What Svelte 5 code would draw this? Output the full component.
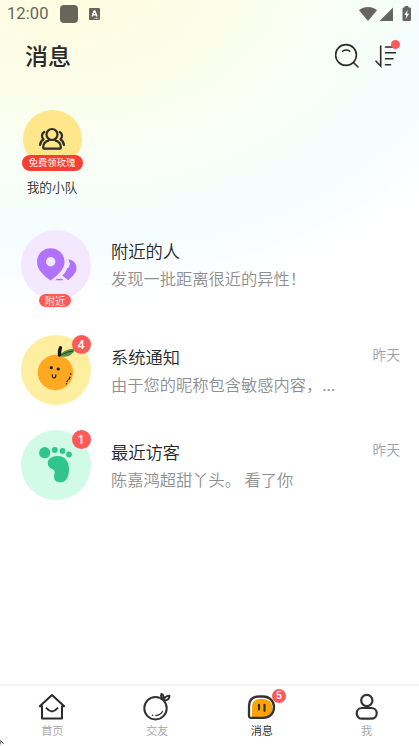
<script lang="ts">
interface Conversation {
  id: string;
  title: string;
  preview: string;
  time?: string;
  unread?: number;
  tag?: string;
}

const conversations: Conversation[] = [
  { id: 'nearby', title: '附近的人', preview: '发现一批距离很近的异性！', tag: '附近' },
  { id: 'system', title: '系统通知', preview: '由于您的昵称包含敏感内容，...', time: '昨天', unread: 4 },
  { id: 'visitors', title: '最近访客', preview: '陈嘉鸿超甜丫头。 看了你', time: '昨天', unread: 1 },
];

const tabs = [
  { id: 'home', label: '首页' },
  { id: 'friends', label: '交友' },
  { id: 'messages', label: '消息', unread: 5 },
  { id: 'me', label: '我' },
];

let activeTab = $state('messages');
</script>

<div class="screen">
  <div class="status-bar">
    <span class="clock">12:00</span>
    <span class="status-block"></span>
    <svg class="status-app" width="11" height="12" viewBox="0 0 11 12">
      <rect width="11" height="12" rx="1" fill="#66665b" />
      <path d="M3 8.5 5.2 3h.6L8 8.5M3.8 6.8h3.4" fill="none" stroke="#fff" stroke-width="1.4" />
      <path d="M5.5 10.3h4" stroke="#fff" stroke-width="1" stroke-dasharray="1 .6" />
    </svg>
    <svg class="status-icons" width="54" height="16" viewBox="0 0 54 16">
      <path d="M0 4.2C5-.2 13-.2 18 4.2L9 15Z" fill="#656662" />
      <path d="M34 1.5V15H20.5Z" fill="#656662" />
      <path d="M45.6 0h3.8v1.6H51q1 0 1 1V14q0 1-1 1h-6.500q-1 0-1-1V2.600q0-1 1-1h1.100Z" fill="#656662" />
      <path d="M48.600 3.800 45.300 9h2l-.6 4 3.400-5.300h-2Z" fill="#fff" />
    </svg>
  </div>

  <header class="header">
    <h1>消息</h1>
    <div class="actions">
      <button type="button" aria-label="搜索">
        <svg width="26" height="26" viewBox="0 0 26 26" fill="none" stroke="#2b2b2b" stroke-width="1.6" stroke-linecap="round">
          <circle cx="11" cy="12" r="10.400" />
          <path d="M7.700 8.200q3.500-2.500 7 0M18.500 19.500l4.500 4.500" />
        </svg>
      </button>
      <button type="button" class="sort" aria-label="排序">
        <svg width="24" height="26" viewBox="0 0 24 26" fill="none" stroke="#2b2b2b" stroke-width="1.600" stroke-linecap="round">
          <path d="M5.700 3v20L1 18.200M10.500 4h10M10.500 9.800h10M10.500 15.800h7.500M10.500 21.700h5" />
        </svg>
        <span class="dot"></span>
      </button>
    </div>
  </header>

  <section class="team">
    <div class="team-avatar">
      <svg width="28" height="24" viewBox="0 0 28 24" fill="none" stroke="#2e2d28" stroke-width="2.200" stroke-linecap="round" stroke-linejoin="round">
        <circle cx="14" cy="7.500" r="5.500" />
        <path d="M10.500 13.600C7 14.500 5.200 17 5.200 20.200q0 1.500 1.500 1.500h14.600q1.500 0 1.500-1.500c0-3.200-1.800-5.700-5.300-6.600" />
        <path d="M6.300 5Q4 6.200 4 9q0 1.900 1.500 3.200Q2.500 14 2 18M21.700 5Q24 6.200 24 9q0 1.900-1.500 3.200 3 1.800 3.500 5.800" />
      </svg>
      <span class="team-tag">免费领玫瑰</span>
    </div>
    <span class="team-name">我的小队</span>
  </section>

  <main class="list">
    {#each conversations as item (item.id)}
      <div class="row {item.id}">
        <div class="avatar">
          {#if item.id === 'nearby'}
            <svg width="70" height="70" viewBox="0 0 70 70">
              <g fill="#b172ff">
                <path d="M47.500 29.300c5 .8 8 4.400 8 8.700 0 4.900-4 8.600-8.300 12.200l-6-4.600c2.500-2.400 4.200-4.700 4.800-7.200l2.400-1.600-.4-1.500 1.500-1.200-1.200-1.400Z" />
                <path d="M29.500 18.200c8 0 14 6 14 13.700 0 8-7.500 13.500-14 18.600-6-4.600-13.500-10.600-13.500-18.600 0-7.700 6-13.700 13.500-13.700Z" />
                <path d="M36 48.700h5l1.500 1.600h-8.500Z" />
              </g>
              <circle cx="29.700" cy="31.800" r="4.700" fill="#f3e8ff" />
            </svg>
          {:else if item.id === 'system'}
            <svg width="70" height="70" viewBox="0 0 70 70">
              <circle cx="34.400" cy="37.500" r="17.700" fill="#ffa923" />
              <path d="M38.500 21c3-5.500 9-7.500 16-7.300-2.500 6-8 9.500-16 7.300Z" fill="#559444" />
              <path d="M40.500 20q5.500-3.500 11.500-4" fill="none" stroke="#244820" stroke-width="1" />
              <path d="M38.500 20Q38 16 39.500 12.800" fill="none" stroke="#171916" stroke-width="3.400" stroke-linecap="round" />
              <circle cx="30.300" cy="32.700" r="1.600" fill="#211e16" />
              <circle cx="37.200" cy="34" r="1.600" fill="#211e16" />
              <path d="M31.300 39.500q-.2 3.700 2 3.500 1.500-.3 1.600-3.200M49.800 38.500v1M49 42l-1 2.500M46.500 45.500l-.5 1M45.500 48.500v.3" fill="none" stroke="#211e16" stroke-width="1.200" stroke-linecap="round" />
            </svg>
          {:else}
            <svg width="70" height="70" viewBox="0 0 70 70" fill="#2fc58b">
              <circle cx="23.700" cy="22.700" r="5.600" />
              <circle cx="33.800" cy="20" r="2.900" />
              <circle cx="41.500" cy="21" r="2.900" />
              <circle cx="48" cy="24.500" r="2.900" />
              <path d="M36 26c7.500-.5 12 5 12 13 0 6.500-2 13-8 13.300-4.500.2-7.200-2-7-5.500.1-2 .8-3.500.6-5.300-.3-2-2.600-2.200-4.600-3.800-1.900-1.500-2.600-3.600-2.200-5.700.8-3.700 4.700-5.800 9.200-6Z" />
            </svg>
          {/if}
          {#if item.unread}
            <span class="badge">{item.unread}</span>
          {/if}
          {#if item.tag}
            <span class="tag">{item.tag}</span>
          {/if}
        </div>
        <div class="body">
          <div class="title">{item.title}</div>
          <div class="preview">{item.preview}</div>
        </div>
        {#if item.time}
          <span class="time">{item.time}</span>
        {/if}
      </div>
    {/each}
  </main>

  <nav class="tab-bar">
    {#each tabs as tab (tab.id)}
      <button type="button" class="tab" class:active={activeTab === tab.id} onclick={() => (activeTab = tab.id)}>
        <span class="tab-icon">
          {#if tab.id === 'home'}
            <svg width="30" height="28" viewBox="0 0 30 28" fill="none" stroke="#30282a" stroke-width="2" stroke-linejoin="round" stroke-linecap="round">
              <path d="M15 2 2.800 13.200H5V25.500H25V13.200h2.200Z" />
              <path d="M9.500 15.200q5.500 6.500 11 0" />
            </svg>
          {:else if tab.id === 'friends'}
            <svg width="30" height="28" viewBox="0 0 30 28" fill="none" stroke="#333" stroke-width="2" stroke-linecap="round" stroke-linejoin="round">
              <circle cx="13.500" cy="15.200" r="11.200" />
              <path d="M21 6.300q-3-2.500-1.500-5.500 3 1.500 1.500 5.500ZM21.500 7.300q1-4.300 6-4.500-.5 5.200-6 4.500Z" stroke-width="1.900" />
              <path d="M14 22.500q4.500-.5 6.500-4M10.500 22.200h.2" stroke-width="1.400" />
            </svg>
          {:else if tab.id === 'messages'}
            <svg width="30" height="28" viewBox="0 0 30 28" stroke-linejoin="round" stroke-linecap="round">
              <path d="M2 25V13.500Q2 3.500 12 3.500h4c6.500 0 11 4.500 11 10.700S22.500 25 16 25Z" fill="#fff" />
              <path d="M5 24.500V14.500Q5 6 13 6h3.500q9 1 9 9t-9 9.500Z" fill="#ffa20a" />
              <path d="M4 24.800Q2 24.800 2 22.800V13.500Q2 3.500 12 3.500h4c6.500 0 11 4.500 11 10.700S22.500 24.800 16 24.800Z" fill="none" stroke="#333" stroke-width="2.300" />
              <path d="M12 11.800v4.700M17.500 11.800v6" stroke="#333" stroke-width="2.200" />
            </svg>
          {:else}
            <svg width="30" height="28" viewBox="0 0 30 28" fill="none" stroke="#333" stroke-width="2.200">
              <circle cx="14.800" cy="7.500" r="5.600" />
              <rect x="4.700" y="15" width="20" height="10.700" rx="5.200" />
            </svg>
          {/if}
          {#if tab.unread}
            <span class="tab-badge">{tab.unread}</span>
          {/if}
        </span>
        <span class="tab-label">{tab.label}</span>
      </button>
    {/each}
    <svg class="corner" width="5" height="6" viewBox="0 0 5 6">
      <path d="M0 .5 3.500 3.500M0 2v2.500" stroke="#111" stroke-width="1" />
    </svg>
  </nav>
</div>

<style>
  :global(body) {
    margin: 0;
  }

  .screen {
    display: flex;
    flex-direction: column;
    height: 746px;
    overflow: hidden;
    font-family: 'Noto Sans CJK SC', 'Noto Sans', sans-serif;
    font-weight: 350;
    background:
      radial-gradient(
        ellipse 470px 320px at 70px -20px,
        #fffcdf 0%,
        #fefde4 18%,
        #fbfeec 38%,
        #f8fff5 58%,
        #f5fdfe 78%,
        #f8fdff 88%,
        #fff 100%
      );
  }

  button {
    padding: 0;
    border: 0;
    background: none;
    font-family: inherit;
    font-weight: inherit;
  }

  svg {
    display: block;
  }

  .status-bar {
    display: flex;
    align-items: center;
    height: 28px;
    padding: 0 6px 0 7px;
    flex-shrink: 0;
  }

  .clock {
    width: 53px;
    font: 16.5px/30px Roboto, sans-serif;
    letter-spacing: 0.1px;
    color: #66665b;
  }

  .status-block {
    width: 18px;
    height: 18px;
    margin-right: 11px;
    border-radius: 4px;
    background: #66665b;
  }

  .status-icons {
    margin-left: auto;
  }

  .header {
    display: flex;
    align-items: center;
    justify-content: space-between;
    height: 56px;
    padding: 0 20px 0 25px;
    flex-shrink: 0;
  }

  h1 {
    margin: 0 0 2px;
    font-size: 23px;
    font-weight: 500;
    line-height: 54px;
    color: #292a27;
  }

  .actions {
    display: flex;
    gap: 14px;
  }

  .sort {
    position: relative;
  }

  .dot {
    position: absolute;
    top: -3px;
    right: -1px;
    width: 9px;
    height: 9px;
    border-radius: 50%;
    background: #ff5959;
  }

  .team {
    display: flex;
    flex-direction: column;
    align-items: center;
    width: 62px;
    margin: 26px 0 0 21px;
    flex-shrink: 0;
  }

  .team-avatar {
    position: relative;
    display: flex;
    justify-content: center;
    width: 59px;
    height: 41px;
    padding-top: 17px;
    border-radius: 50%;
    background: #ffe68a;
  }

  .team-tag {
    position: absolute;
    top: 45px;
    left: -1px;
    width: 61px;
    height: 16px;
    border-radius: 8px;
    background: #fb3e34;
    color: #fff;
    font-size: 9.3px;
    font-weight: 400;
    line-height: 15px;
    text-align: center;
    white-space: nowrap;
  }

  .team-name {
    margin-top: 9px;
    font-size: 12.7px;
    line-height: 19px;
    color: #292a2b;
  }

  .list {
    flex: 1;
    padding: 33.5px 19px 0 21px;
  }

  .row {
    display: flex;
    align-items: flex-start;
    height: 70px;
    margin-bottom: 25.5px;
  }

  .nearby {
    margin-bottom: 35.2px;
  }

  .avatar {
    position: relative;
    width: 69.5px;
    height: 70px;
    border-radius: 50%;
    background: #f3e8ff;
    flex-shrink: 0;
  }

  .system .avatar {
    background: #ffeda0;
  }

  .visitors .avatar {
    background: #d2fbe7;
  }

  .badge {
    position: absolute;
    top: 0;
    right: 0;
    width: 19px;
    height: 19px;
    border-radius: 50%;
    background: #ff5959;
    color: #fff;
    font: 500 12.5px/19px Roboto, sans-serif;
    text-align: center;
  }

  .tag {
    position: absolute;
    top: 64px;
    left: 18px;
    width: 32px;
    height: 13px;
    border-radius: 7px;
    background: #ff5959;
    color: #fff;
    font-size: 10.3px;
    line-height: 13px;
    text-align: center;
  }

  .body {
    flex: 1;
    min-width: 0;
    padding: 8px 0 0 20.5px;
  }

  .system .body,
  .visitors .body {
    padding-top: 9px;
  }

  .title {
    font-size: 17.3px;
    line-height: 26px;
    color: #262626;
  }

  .preview {
    margin-top: 1px;
    font-size: 16.25px;
    line-height: 27px;
    color: #8f8f8f;
    white-space: nowrap;
  }

  .time {
    padding-top: 9.3px;
    font-size: 13.8px;
    line-height: 21px;
    color: #9ba2ad;
  }

  .tab-bar {
    position: relative;
    display: flex;
    height: 60px;
    border-top: 2px solid #f3f3f3;
    background: #fff;
    flex-shrink: 0;
  }

  .tab {
    display: flex;
    flex: 1;
    flex-direction: column;
    align-items: center;
    padding-top: 7px;
  }

  .tab-icon {
    position: relative;
  }

  .tab-badge {
    position: absolute;
    top: -4px;
    right: -9px;
    width: 14px;
    height: 14px;
    border-radius: 50%;
    background: #ff5959;
    color: #fff;
    font: 500 11px/14px Roboto, sans-serif;
    text-align: center;
  }

  .tab-label {
    margin-top: 1px;
    font-size: 11.2px;
    line-height: 17px;
    color: #a3a3a3;
  }

  .active .tab-label {
    color: #262626;
  }

  .corner {
    position: absolute;
    left: 0;
    bottom: 0;
  }
</style>
